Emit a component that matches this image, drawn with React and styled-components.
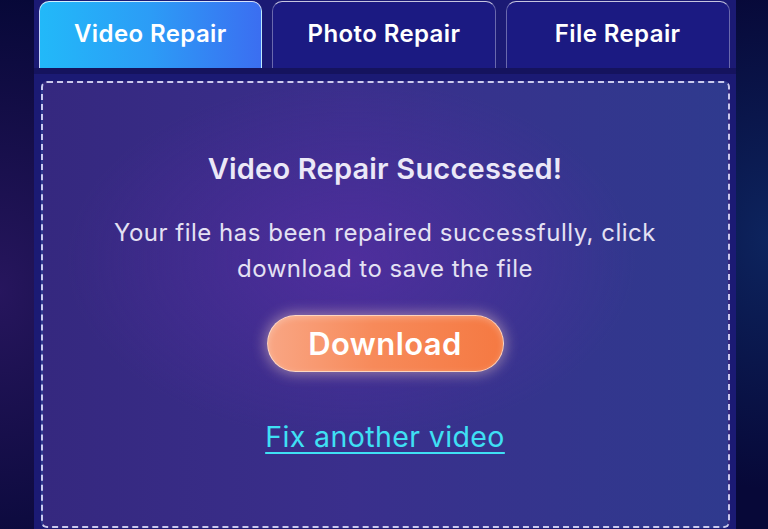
import React from 'react'
import styled, { createGlobalStyle } from 'styled-components'

const GlobalStyle = createGlobalStyle`
    html, body {
        margin: 0;
        padding: 0;
        height: 529px;
        overflow: hidden;
        background: #080a3c;
    }
    * {
        box-sizing: border-box;
    }
`

const Page = styled.div`
    width: 768px;
    height: 529px;
    display: flex;
    justify-content: center;
    padding-left: 1px;
    font-family: 'Inter', 'Noto Sans', sans-serif;
    background:
        radial-gradient(ellipse 300px 420px at 0% 55%, rgba(70, 35, 130, 0.5), transparent 70%),
        radial-gradient(ellipse 240px 360px at 100% 45%, rgba(20, 70, 140, 0.45), transparent 70%),
        #070838;
`

const Panel = styled.section`
    width: 702px;
    display: flex;
    flex-direction: column;
    background: #1b1a74;
`

const TabBar = styled.nav`
    display: flex;
    gap: 10px;
    padding: 1px 6px 0 5px;
    border-bottom: 6px solid #15135e;
`

const Tab = styled.button`
    flex: 1;
    height: 67px;
    border: 1px solid ${p => (p.active ? 'rgba(255,255,255,0.7)' : 'rgba(255,255,255,0.35)')};
    border-top-color: ${p => (p.active ? 'rgba(255,255,255,0.8)' : 'rgba(255,255,255,0.75)')};
    border-bottom: none;
    border-radius: 10px 10px 0 0;
    background: ${p =>
        p.active ? 'linear-gradient(90deg, #22b9f9 0%, #2c9cf6 50%, #3b6ef1 100%)' : '#1b1a82'};
    color: #ffffff;
    font-family: inherit;
    font-size: 24px;
    font-weight: 600;
    letter-spacing: 0.4px;
    padding: 0 0 4px;
    cursor: pointer;
`

const Body = styled.div`
    padding: 7px 6px 1px 7px;
    flex: 1;
    display: flex;
`

const DropZone = styled.div`
    flex: 1;
    border: 2px dashed rgba(230, 230, 255, 0.85);
    border-radius: 6px;
    display: flex;
    flex-direction: column;
    align-items: center;
    padding-top: 68px;
    background:
        radial-gradient(ellipse 380px 240px at 45% 40%, rgba(95, 45, 170, 0.55), transparent 75%),
        linear-gradient(90deg, #35287f 0%, #3a2f8c 45%, #2f3a8e 100%);
`

const Title = styled.h2`
    margin: 0;
    font-size: 29px;
    font-weight: 600;
    letter-spacing: 0.2px;
    color: #ebe8f7;
    line-height: 36px;
`

const Message = styled.p`
    margin: 28px 0 0;
    font-size: 24px;
    font-weight: 400;
    letter-spacing: 0.5px;
    line-height: 36px;
    color: #e4e1f3;
    text-align: center;
    width: 600px;
`

const DownloadButton = styled.button`
    margin-top: 28px;
    width: 237px;
    height: 57px;
    border: 1px solid rgba(255, 230, 215, 0.8);
    border-radius: 29px;
    background: linear-gradient(90deg, #f9a684 0%, #f78a5a 45%, #f57942 100%);
    box-shadow: 0 0 14px 2px rgba(255, 220, 200, 0.45), inset 0 2px 6px rgba(255, 255, 255, 0.25);
    color: #ffffff;
    font-family: inherit;
    font-size: 31px;
    font-weight: 600;
    letter-spacing: 0.4px;
    cursor: pointer;
`

const AnotherLink = styled.a`
    margin-top: 47px;
    font-size: 28.5px;
    font-weight: 400;
    letter-spacing: 0.4px;
    color: #3fe0f4;
    text-decoration: underline;
    text-decoration-thickness: 2px;
    text-underline-offset: 5px;
    cursor: pointer;
`

const tabs = ['Video Repair', 'Photo Repair', 'File Repair']

const App = () => (
    <>
        <GlobalStyle />
        <Page>
            <Panel>
                <TabBar>
                    {tabs.map((t, i) => (
                        <Tab key={t} active={i === 0}>
                            {t}
                        </Tab>
                    ))}
                </TabBar>
                <Body>
                    <DropZone>
                        <Title>Video Repair Successed!</Title>
                        <Message>
                            Your file has been repaired successfully, click download to save the file
                        </Message>
                        <DownloadButton>Download</DownloadButton>
                        <AnotherLink>Fix another video</AnotherLink>
                    </DropZone>
                </Body>
            </Panel>
        </Page>
    </>
)

export default App
